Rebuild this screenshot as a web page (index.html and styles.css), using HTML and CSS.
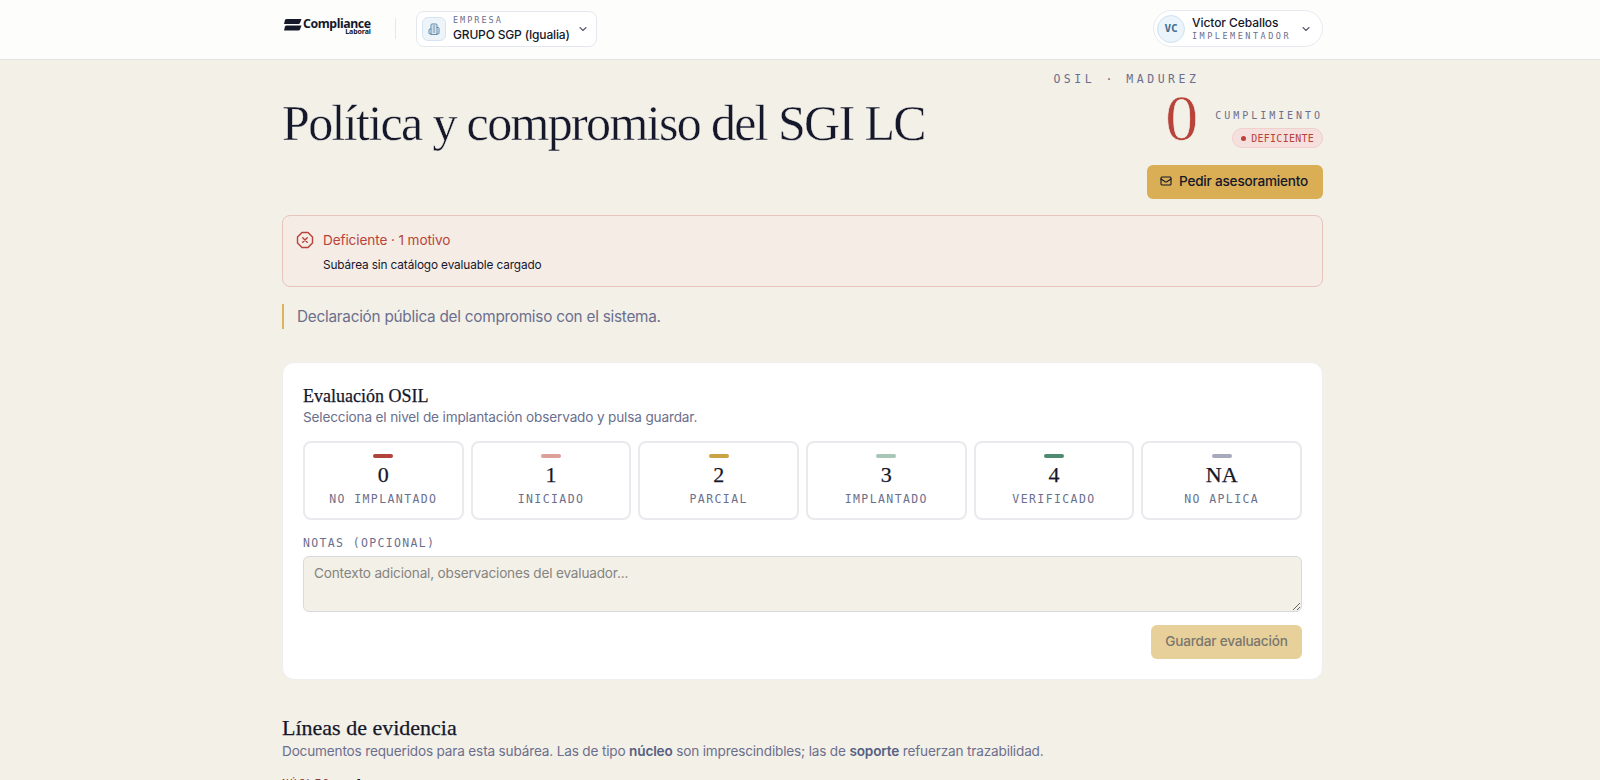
FILE: index.html
```html
<!DOCTYPE html>
<html lang="es">
<head>
    <meta charset="UTF-8">
    <meta name="viewport" content="width=device-width, initial-scale=1.0">
    <title>Política y compromiso del SGI LC</title>
    <link rel="stylesheet" href="styles.css">
</head>
<body>
    <header class="topbar">
        <div class="brand">
            <svg class="brand-mark" width="18" height="12" viewBox="0 0 18 12">
                <path d="M2.500 0h15l-1.500 4Q15.500 5 14.500 5H0l1-4Q1.500 0 2.500 0z" fill="#15172b"/>
                <path d="M2.500 6.500h15l-1.500 4Q15.500 11.500 14.500 11.500H0l1-4Q1.500 6.500 2.500 6.500z" fill="#15172b"/>
            </svg>
            <div class="brand-text">
                <span class="brand-name">Compliance</span>
                <span class="brand-sub">Laboral</span>
            </div>
        </div>
        <div class="divider"></div>
        <button class="company">
            <span class="company-icon">
                <svg width="12" height="12" viewBox="0 0 24 24" fill="none" stroke="currentColor" stroke-width="2" stroke-linecap="round" stroke-linejoin="round">
                    <path d="M6 22V4a2 2 0 0 1 2-2h8a2 2 0 0 1 2 2v18z"/>
                    <path d="M6 12H4a2 2 0 0 0-2 2v6a2 2 0 0 0 2 2h2M18 9h2a2 2 0 0 1 2 2v9a2 2 0 0 1-2 2h-2M10 6h4M10 10h4M10 14h4M10 18h4"/>
                </svg>
            </span>
            <span class="stack">
                <span class="company-label">EMPRESA</span>
                <span class="company-name">GRUPO SGP (Igualia)</span>
            </span>
            <svg class="chevron" width="12" height="12" viewBox="0 0 24 24"><path d="m6 9 6 6 6-6"/></svg>
        </button>
        <button class="user">
            <span class="avatar">VC</span>
            <span class="stack">
                <span class="user-name">Victor Ceballos</span>
                <span class="user-role">IMPLEMENTADOR</span>
            </span>
            <svg class="chevron" width="12" height="12" viewBox="0 0 24 24"><path d="m6 9 6 6 6-6"/></svg>
        </button>
    </header>

    <main class="container">
        <section class="hero">
            <h1>Política y compromiso del SGI LC</h1>
            <div class="hero-side">
                <div class="score-row">
                    <div class="score">
                        <span class="score-label">OSIL · MADUREZ</span>
                        <span class="score-value">0</span>
                    </div>
                    <div class="status">
                        <span class="status-label">CUMPLIMIENTO</span>
                        <span class="badge"><i class="dot"></i>DEFICIENTE</span>
                    </div>
                </div>
                <button class="btn btn-advice">
                    <svg width="12" height="12" viewBox="0 0 24 24" fill="none" stroke="currentColor" stroke-width="2.2" stroke-linecap="round" stroke-linejoin="round">
                        <rect x="2" y="4" width="20" height="16" rx="2"/>
                        <path d="m2 8 8.500 5.500a3 3 0 0 0 3 0L22 8"/>
                    </svg>
                    <span>Pedir asesoramiento</span>
                </button>
            </div>
        </section>

        <section class="alert">
            <svg width="18" height="18" viewBox="0 0 24 24" fill="none" stroke="currentColor" stroke-width="1.900" stroke-linecap="round" stroke-linejoin="round">
                <path d="M8 2h8l6 6v8l-6 6H8l-6-6V8z"/>
                <path d="m15 9-6 6M9 9l6 6"/>
            </svg>
            <div>
                <p class="alert-title">Deficiente · 1 motivo</p>
                <p class="alert-text">Subárea sin catálogo evaluable cargado</p>
            </div>
        </section>

        <p class="quote">Declaración pública del compromiso con el sistema.</p>

        <section class="card">
            <h2 class="card-title">Evaluación OSIL</h2>
            <p class="card-text">Selecciona el nivel de implantación observado y pulsa guardar.</p>
            <div class="levels">
                <button class="level"><i class="bar bar-0"></i><span class="level-value">0</span><span class="level-label">NO IMPLANTADO</span></button>
                <button class="level"><i class="bar bar-1"></i><span class="level-value">1</span><span class="level-label">INICIADO</span></button>
                <button class="level"><i class="bar bar-2"></i><span class="level-value">2</span><span class="level-label">PARCIAL</span></button>
                <button class="level"><i class="bar bar-3"></i><span class="level-value">3</span><span class="level-label">IMPLANTADO</span></button>
                <button class="level"><i class="bar bar-4"></i><span class="level-value">4</span><span class="level-label">VERIFICADO</span></button>
                <button class="level"><i class="bar bar-na"></i><span class="level-value">NA</span><span class="level-label">NO APLICA</span></button>
            </div>
            <label class="notes-label" for="notes">NOTAS (OPCIONAL)</label>
            <textarea class="notes" id="notes" placeholder="Contexto adicional, observaciones del evaluador..."></textarea>
            <div class="actions">
                <button class="btn btn-save" disabled>Guardar evaluación</button>
            </div>
        </section>

        <section class="evidence">
            <h2 class="evidence-title">Líneas de evidencia</h2>
            <p class="evidence-text">Documentos requeridos para esta subárea. Las de tipo <b>núcleo</b> son imprescindibles; las de <b>soporte</b> refuerzan trazabilidad.</p>
            <div class="group-head"><span>NÚCLEO</span><span class="count">1</span></div>
        </section>
    </main>
</body>
</html>
```
FILE: styles.css
```css
* {
    box-sizing: border-box;
}
html, body {
    height: 100%;
    overflow: hidden;
}
body {
    margin: 0;
    background-color: #f3f0e8;
    color: #15172b;
    font-family: Inter, "Liberation Sans", sans-serif;
}
h1, h2, p {
    margin: 0;
    font-weight: 400;
}
h1, h2, .score-value, .level-value {
    font-family: "Liberation Serif", serif;
}
button {
    font-family: inherit;
    color: inherit;
    background: none;
    border: none;
    padding: 0;
    text-align: left;
}
.topbar {
    display: flex;
    align-items: center;
    height: 60px;
    padding: 0 277px 2px 284px;
    background-color: #fdfdfc;
    border-bottom: 1px solid #e4e4e6;
}
.brand {
    display: flex;
    align-items: flex-start;
    width: 88px;
    height: 20px;
}
.brand-mark {
    flex: none;
    margin-right: 1px;
}
.brand-text {
    display: flex;
    flex-direction: column;
    align-items: flex-end;
    font-family: "Noto Sans", sans-serif;
    font-weight: 700;
}
.brand-name {
    font-size: 12.3px;
    line-height: 9px;
    letter-spacing: -0.4px;
}
.brand-sub {
    font-size: 7px;
    line-height: 8px;
    letter-spacing: -0.1px;
}
.divider {
    width: 1px;
    height: 21px;
    margin: 0 20px 0 23px;
    background-color: #e6e7ea;
}
.company {
    display: flex;
    align-items: center;
    width: 181px;
    height: 36px;
    padding: 0 7px 0 5px;
    background-color: #fff;
    border: 1px solid #e4e8ee;
    border-radius: 8px;
}
.company-icon {
    display: flex;
    align-items: center;
    justify-content: center;
    width: 24px;
    height: 24px;
    margin-right: 7px;
    color: #5b86a8;
    background-color: #eef5fa;
    border: 1px solid #d5e4f0;
    border-radius: 6px;
}
.stack {
    display: flex;
    flex-direction: column;
    white-space: nowrap;
}
.company .stack {
    padding-bottom: 1px;
}
.company-label, .user-role, .score-label, .status-label, .badge, .level-label, .notes-label, .group-head, .avatar {
    font-family: "DejaVu Sans Mono", "Liberation Mono", monospace;
    color: #6b6f8d;
}
.company-label {
    font-size: 8.5px;
    line-height: 13px;
    letter-spacing: 2px;
}
.company-name {
    font-size: 12px;
    line-height: 15px;
    font-weight: 500;
    letter-spacing: -0.17px;
}
.chevron {
    flex: none;
    margin-left: auto;
    fill: none;
    stroke: #5c5f72;
    stroke-width: 2.3;
    stroke-linecap: round;
    stroke-linejoin: round;
}
.user {
    display: flex;
    align-items: center;
    width: 170px;
    height: 37px;
    margin-left: auto;
    padding: 0 10px 0 3px;
    background-color: #fff;
    border: 1px solid #e6eaf0;
    border-radius: 19px;
}
.avatar {
    display: flex;
    align-items: center;
    justify-content: center;
    width: 28px;
    height: 28px;
    margin-right: 7px;
    color: #44708f;
    font-size: 11px;
    font-weight: 700;
    background-color: #eaf4fa;
    border: 1px solid #cfe2ee;
    border-radius: 50%;
}
.user-name {
    font-size: 12px;
    line-height: 15px;
    font-weight: 500;
    letter-spacing: -0.07px;
}
.user-role {
    font-size: 8.5px;
    line-height: 12px;
    letter-spacing: 2.5px;
}
.container {
    padding: 0 277px 0 282px;
}
.hero {
    display: flex;
    justify-content: space-between;
    height: 155px;
}
h1 {
    margin-top: 34px;
    font-size: 50px;
    line-height: 58px;
    letter-spacing: -1.65px;
    white-space: nowrap;
    -webkit-text-stroke: 0.4px #f3f0e8;
}
.hero-side {
    display: flex;
    flex-direction: column;
    align-items: flex-end;
}
.score-row {
    display: flex;
    align-items: flex-end;
    gap: 16px;
    height: 89px;
}
.score {
    display: flex;
    flex-direction: column;
    align-items: flex-end;
}
.score-label {
    font-size: 11.5px;
    line-height: 16px;
    letter-spacing: 3.5px;
}
.score-value {
    margin-right: 1px;
    font-size: 66px;
    line-height: 62px;
    color: #b8433a;
    -webkit-text-stroke: 0.6px #f3f0e8;
}
.status {
    display: flex;
    flex-direction: column;
    align-items: flex-end;
    padding-bottom: 1px;
}
.status-label {
    font-size: 10px;
    line-height: 14px;
    letter-spacing: 2.95px;
}
.badge {
    display: flex;
    align-items: center;
    gap: 5px;
    height: 20px;
    margin-top: 5px;
    padding: 0 8px 0 8px;
    font-size: 10px;
    letter-spacing: 0.25px;
    color: #b8433a;
    background-color: #f5e0dd;
    border: 1px solid #efd0cd;
    border-radius: 11px;
}
.dot {
    width: 5px;
    height: 5px;
    border-radius: 50%;
    background-color: #b8433a;
}
.btn {
    height: 34px;
    padding-bottom: 2px;
    font-size: 13.6px;
    font-weight: 500;
    letter-spacing: -0.22px;
    border-radius: 6px;
    white-space: nowrap;
}
.btn-advice {
    display: flex;
    align-items: center;
    gap: 7px;
    width: 176px;
    margin-top: 16px;
    padding-left: 13px;
    background-color: #d9ae55;
}
.alert {
    display: flex;
    gap: 9px;
    height: 72px;
    padding: 15px 13px;
    background-color: #f5ece6;
    border: 1px solid #e8c4bc;
    border-radius: 8px;
    color: #b8433a;
}
.alert-title {
    font-size: 13.6px;
    line-height: 18px;
    letter-spacing: -0.11px;
}
.alert-text {
    margin-top: 8px;
    font-size: 11.8px;
    line-height: 16px;
    letter-spacing: -0.12px;
    color: #15172b;
}
.quote {
    margin-top: 17px;
    padding-left: 13px;
    font-size: 15.3px;
    line-height: 25px;
    letter-spacing: -0.24px;
    color: #6b6f8d;
    border-left: 2px solid #dcb25c;
}
.card {
    height: 318px;
    margin-top: 33px;
    padding: 23px 20px 0;
    background-color: #fff;
    border: 1px solid #eeeeec;
    border-radius: 12px;
}
.card-title {
    font-size: 18px;
    line-height: 20px;
    -webkit-text-stroke: 0.25px;
}
.card-text {
    margin-top: 1px;
    font-size: 13.6px;
    line-height: 20px;
    letter-spacing: -0.16px;
    color: #6b6f8d;
}
.levels {
    display: grid;
    grid-template-columns: repeat(6, 1fr);
    gap: 7px;
    margin-top: 14px;
}
.level {
    display: flex;
    flex-direction: column;
    align-items: center;
    height: 79px;
    padding-top: 11px;
    border: 2px solid #e8eaed;
    border-radius: 8px;
}
.bar {
    width: 20px;
    height: 4px;
    border-radius: 2px;
}
.bar-0 { background-color: #b0433b; }
.bar-1 { background-color: #dc9f9a; }
.bar-2 { background-color: #cba345; }
.bar-3 { background-color: #a8c5b8; }
.bar-4 { background-color: #4f8b70; }
.bar-na { background-color: #a6a8bb; }
.level-value {
    margin-top: 4px;
    font-size: 22px;
    line-height: 26px;
    -webkit-text-stroke: 0.25px;
}
.level-label {
    margin-top: 3px;
    font-size: 11.5px;
    line-height: 16px;
    letter-spacing: 1.4px;
}
.notes-label {
    display: block;
    margin-top: 15px;
    font-size: 11.5px;
    line-height: 16px;
    letter-spacing: 1.35px;
}
.notes {
    display: block;
    width: 100%;
    height: 56px;
    margin-top: 5px;
    padding: 6px 10px;
    font-family: inherit;
    font-size: 13.6px;
    line-height: 20px;
    letter-spacing: -0.18px;
    background-color: #f3f0e8;
    border: 1px solid #d6d9dd;
    border-radius: 6px;
    resize: vertical;
}
.notes::placeholder {
    color: #85847f;
}
.actions {
    display: flex;
    justify-content: flex-end;
    margin-top: 13px;
}
.btn-save {
    width: 151px;
    text-align: center;
    color: #7a776f;
    background-color: #e8d09a;
}
.evidence {
    margin-top: 35px;
}
.evidence-title {
    font-size: 22px;
    line-height: 26px;
    -webkit-text-stroke: 0.25px;
}
.evidence-text {
    font-size: 13.6px;
    line-height: 20px;
    letter-spacing: -0.17px;
    color: #6b6f8d;
    white-space: nowrap;
}
.evidence-text b {
    font-weight: 600;
    color: #566083;
}
.group-head {
    display: flex;
    gap: 25px;
    margin-top: 15px;
    font-size: 11px;
    line-height: 16px;
    letter-spacing: 1.5px;
    color: #8c3a35;
}
.count {
    color: #15172b;
}
```
